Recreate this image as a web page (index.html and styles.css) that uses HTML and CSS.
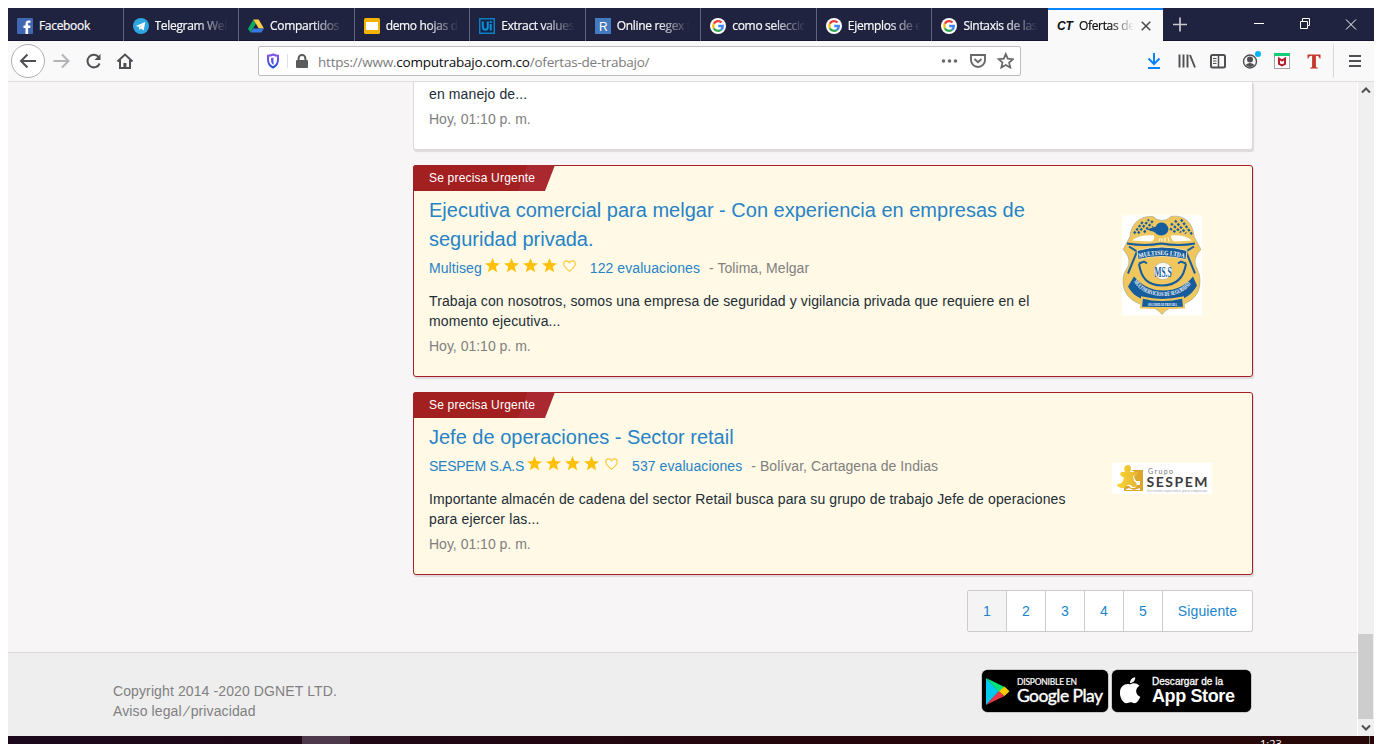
FILE: index.html
```html
<!DOCTYPE html>
<html lang="es">
<head>
<meta charset="utf-8">
<title>Ofertas de trabajo</title>
<link rel="stylesheet" href="styles.css">
</head>
<body>
<svg width="0" height="0" class="defs">
  <symbol id="google" viewBox="0 0 16 16">
    <circle cx="8" cy="8" r="8" fill="#fff"/>
    <g fill="none" stroke-width="2.3">
      <path d="M11.500 4.500A4.800 4.800 0 0 0 3.800 5.800" stroke="#ea4335"/>
      <path d="M3.800 5.800a4.800 4.800 0 0 0 0 4.400" stroke="#fbbc05"/>
      <path d="M3.800 10.200a4.800 4.800 0 0 0 7.200 1.600" stroke="#34a853"/>
      <path d="M11 11.800A4.600 4.600 0 0 0 12.800 8H8.200" stroke="#4285f4"/>
    </g>
  </symbol>
  <symbol id="star" viewBox="0 0 15 15"><path d="M7.500 0l2 5.100 5.500.3-4.300 3.400 1.500 5.400-4.700-3-4.700 3 1.500-5.400L0 5.400l5.500-.3z" fill="#ffc107"/></symbol>
  <symbol id="heart" viewBox="0 0 13 12"><path d="M6.500 11.200C4 9 .8 6.700.8 3.900.8 2.100 2 .9 3.500.9c1.300 0 2.300.7 3 1.900.7-1.200 1.700-1.900 3-1.900 1.500 0 2.700 1.200 2.700 3 0 2.800-3.200 5.100-5.700 7.300z" fill="#fffef5" stroke="#ffc72c" stroke-width="1.100"/></symbol>
</svg>
<div class="window">
  <header class="tabs">
    <div class="tab"><svg class="fav" viewBox="0 0 16 16"><rect width="16" height="16" rx="1" fill="#4267b2"/><path d="M8.500 16V10H6.500V7.500h2V5.800c0-2.200 1.300-3.300 3.200-3.300h1.800v2.300h-1.200c-1 0-1.200.5-1.200 1.200v1.500h2.400L13.200 10h-2.100v6z" fill="#fff"/></svg><span class="label">Facebook</span></div>
    <div class="tab"><svg class="fav" viewBox="0 0 16 16"><circle cx="8" cy="8" r="8" fill="#2ca5e0"/><path d="M2.800 8L12.200 4l-1.500 8.500-2.900-2.100-1.400 1.500-.4-2.900z" fill="#fff"/><path d="M6 9l4.500-3.500L7 9.500z" fill="#b5d9ec"/></svg><span class="label fade">Telegram Web</span></div>
    <div class="tab"><svg class="fav" viewBox="0 0 16 16"><path d="M5.400 1.500L0 10.800 2.600 14.500 8 5.500z" fill="#11a861"/><path d="M5.400 1.500h5.200L16 10.500h-5.200z" fill="#ffcf48"/><path d="M5.200 10.500H16l-2.600 4H2.600z" fill="#3777e3"/></svg><span class="label fade">Compartidos c</span></div>
    <div class="tab"><svg class="fav" viewBox="0 0 16 16"><rect width="16" height="16" rx="1.500" fill="#f5b400"/><rect x="2" y="4" width="12" height="8" fill="#fff"/></svg><span class="label fade">demo hojas d</span></div>
    <div class="tab"><svg class="fav" viewBox="0 0 16 16"><rect width="16" height="16" fill="#0b7fc1"/><rect x="1.500" y="1.500" width="13" height="13" fill="#15254a"/><path d="M3.800 3.500V9c0 3.600 5 3.600 5 0V3.500M11.700 6v6.500M11.700 3v2" fill="none" stroke="#0b91da" stroke-width="2"/></svg><span class="label fade">Extract values</span></div>
    <div class="tab"><svg class="fav" viewBox="0 0 16 16"><rect width="16" height="16" fill="#447bbe"/><text x="4" y="12.500" class="rlogo">R</text></svg><span class="label fade">Online regex t</span></div>
    <div class="tab"><svg class="fav"><use href="#google"/></svg><span class="label fade">como seleccio</span></div>
    <div class="tab"><svg class="fav"><use href="#google"/></svg><span class="label fade">Ejemplos de e</span></div>
    <div class="tab"><svg class="fav"><use href="#google"/></svg><span class="label fade">Sintaxis de las</span></div>
    <div class="tab active"><span class="ct">CT</span><span class="label fade">Ofertas de</span><svg class="close" viewBox="0 0 10 10"><path d="M.7.7l8.600 8.600M9.300.7L.7 9.300" stroke="#4a4a4c" stroke-width="1.500"/></svg></div>
    <svg class="controls" viewBox="0 0 211 33" fill="none" stroke="#fff"><path d="M17 9.500v14M10 16.500h14" stroke="#c8c8cf" stroke-width="1.700"/><path d="M91 15.500h10"/><path d="M137.500 13.500h7v7h-7zM139.500 13v-2.500h7v7h-2.500"/><path d="M183 11.500l10 10M193 11.500l-10 10"/></svg>
  </header>
  <nav class="toolbar">
    <svg class="navicons" viewBox="0 0 140 40" fill="none" stroke="#4f4f54" stroke-width="2"><circle cx="20" cy="20" r="16.500" fill="#fff" stroke="#b1b1b3" stroke-width="1"/><path d="M28 20H13.500M19.500 13.500L13 20l6.500 6.500"/><path d="M45.500 20H60M54 13.500l6.500 6.500-6.500 6.500" stroke="#b4b4b6"/><path d="M91 16.500a6.300 6.300 0 1 0 .6 6"/><path d="M92.500 13v6H86.500z" fill="#4f4f54" stroke="none"/><path d="M109.500 20.500l7.500-7 7.500 7M112 19v8h10v-8"/><path d="M116.900 27v-5" stroke-width="3"/></svg>
    <div class="urlbar">
      <svg class="shield" viewBox="0 0 14 16"><defs><linearGradient id="sg" x1="0" y1="0" x2="0" y2="1"><stop offset="0" stop-color="#8255ea"/><stop offset="1" stop-color="#2850d8"/></linearGradient></defs><path d="M7 1.500c2 1 3.500 1.200 5 1.300v3.700c0 4-2 6.500-5 8-3-1.500-5-4-5-8V2.800c1.500-.1 3-.3 5-1.300z" fill="none" stroke="url(#sg)" stroke-width="2"/><path d="M7.500 4.500v7.500C5.500 10.500 5 9 5 6.500v-1.500z" fill="url(#sg)"/></svg>
      <svg class="lock" viewBox="0 0 12 14"><rect y="6" width="12" height="8" rx="1" fill="#5b5b5b"/><path d="M2.600 6.500V4.400a3.400 3.400 0 0 1 6.800 0v2.100" fill="none" stroke="#5b5b5b" stroke-width="2"/></svg>
      <span class="url">https://www.<b>computrabajo.com.co</b>/ofertas-de-trabajo/</span>
      <svg class="urlicons" viewBox="0 0 74 20" fill="none" stroke="#68686b" stroke-width="1.900"><g fill="#68686b" stroke="none"><circle cx="3.500" cy="10" r="1.800"/><circle cx="9.500" cy="10" r="1.800"/><circle cx="15.500" cy="10" r="1.800"/></g><path d="M31 4h14v5a7 7 0 0 1-14 0zM34.500 8l3.500 3.200L41.500 8"/><path d="M65.800 3l2 4.700 5.200.5-3.900 3.400 1.200 5-4.500-2.700-4.500 2.700 1.200-5-3.900-3.400 5.200-.5z" stroke-width="1.700"/></svg>
    </div>
    <svg class="tools" viewBox="0 0 230 40" fill="none" stroke="#4f4f54" stroke-width="2"><path d="M10 12v11M4.500 17.500L10 23l5.500-5.500M4 27h12" stroke="#0a84ff"/><path d="M35.500 13.500v13M39.500 13.500v13M43.500 13.500v13M46 14l5 12.500" stroke-width="1.900"/><rect x="67" y="14" width="14" height="12.500" rx="1.500"/><path d="M74.500 14v12" stroke-width="1.500"/><path d="M69 17.500h3.500M69 20h3.500M69 22.500h3.500" stroke-width="1"/><circle cx="106" cy="20.500" r="6.500" stroke-width="1.400"/><circle cx="106" cy="18.500" r="3" fill="#4f4f54" stroke="none"/><path d="M101.500 24q4.500-4 9 0-4.500 4-9 0z" fill="#4f4f54" stroke="none"/><circle cx="114" cy="13" r="3" fill="#00b3f4" stroke="none"/><rect x="130.500" y="13.500" width="15" height="14" fill="#fff" stroke="#a4a4a4" stroke-width="1"/><path d="M130 13.500h16" stroke="#13ce78" stroke-width="3"/><path d="M135 17.500v5.500l3 1.500 3-1.500v-5.500l-3 2z" fill="#fff" stroke="#b8202e" stroke-width="2"/><path d="M163.500 13.500h13v4h-1c-.4-2-1.400-2.700-3.600-2.700V25c0 1.200.5 1.600 2 1.800v.7h-7.800v-.7c1.500-.2 2-.6 2-1.800V14.800c-2.200 0-3.200.7-3.600 2.700h-1z" fill="#c5382c" stroke="none"/><path d="M189.500 3.500v33" stroke="#d7d7db" stroke-width="1"/><path d="M205 15h12M205 20h12M205 25h12"/></svg>
  </nav>
  <div class="viewport">
    <div class="page">
      <main class="results">
        <article class="offer first">
          <p class="desc">en manejo de...</p>
          <p class="date">Hoy, 01:10 p. m.</p>
        </article>
        <article class="offer urgent">
          <div class="tag"><span>Se precisa Urgente</span></div>
          <div class="text">
            <h2>Ejecutiva comercial para melgar - Con experiencia en empresas de<br>seguridad privada.</h2>
            <p class="company"><a>Multiseg</a><span class="stars"><svg><use href="#star"/></svg><svg><use href="#star"/></svg><svg><use href="#star"/></svg><svg><use href="#star"/></svg><svg class="heart"><use href="#heart"/></svg></span><a>122 evaluaciones</a><span class="place">- Tolima, Melgar</span></p>
            <p class="desc">Trabaja con nosotros, somos una empresa de seguridad y vigilancia privada que requiere en el<br>momento ejecutiva...</p>
            <p class="date">Hoy, 01:10 p. m.</p>
          </div>
          <div class="logo">
            <svg class="badge" viewBox="0 0 80 100">
              <defs><path id="top" d="M17 42.500q23-6 46 0"/><path id="arc" d="M11.500 66Q21 80.500 41 80.500T70.500 66"/></defs>
              <rect width="80" height="100" fill="#fff"/>
              <path d="M8 21C9 7 19 0 31 1q9 8 18 0c13-2 22 6 23 20l7 13c-6 6-7 12-5 17 3 6 4 9 4 15 0 15-10 21-23 25-7 1-11 3-15 8-4-5-8-7-15-8C12 87 1 81 1 65c0-6 2-9 5-14 2-5 1-11-5-17z" fill="#efc75e" stroke="#9ba58b" stroke-width=".6"/>
              <path d="M10 25q7-6 22-5 1 6-4 6zM70 25q-7-6-21-5 0 5 4 6z" fill="#fff"/>
              <path d="M12 18l9-12M16 18L27 4M22 17l9-12M28 15l3-4M49 8l10 9M53 5l11 13M59 4l11 15M48 13l6 4" stroke="#155d9c" stroke-width="2.200" stroke-dasharray="2.500 1.500"/>
              <path d="M25 14l9-3c1-5 9-5 11-1 4 5-1 10-6 10-4 0-5-3-8-4z" fill="#155d9c"/>
              <path d="M37 26l1-3M40 26v-3M43 26v-4M47 26l-1-4" stroke="#fff"/>
              <path d="M5 28q18 3 34 0 18 3 34 0M7 31l8 5-9 22M72 31l-8 5 9 22" fill="none" stroke="#155d9c" stroke-width="2"/>
              <path d="M15 35q25-7 50 0l-1 9q-24-6-48 0z" fill="#155d9c" stroke="#f6dda0"/>
              <path d="M17 48c2 14 8 22 23 22s22-8 24-22M17 48l5-2 3 2M64 48l-5-2-3 2" fill="none" stroke="#155d9c" stroke-width="2"/>
              <path d="M12 61q12 14 29 14 19 0 30-14l4 9Q66 87 41 87 14 87 6 71z" fill="#155d9c"/>
              <path d="M20 82q20 5 41 0l1 10q-21 1-43 0z" fill="#155d9c" stroke="#efc75e" stroke-width="2"/>
              <ellipse cx="41" cy="55.500" rx="9" ry="8.500" fill="#fff" stroke="#9ba58b" stroke-width=".5"/>
              <text class="b-ms" x="32.500" y="61" textLength="17" lengthAdjust="spacingAndGlyphs">MS.S</text>
              <text class="b-top"><textPath href="#top" textLength="46" lengthAdjust="spacingAndGlyphs">MULTISEG LTDA</textPath></text>
              <text class="b-arc"><textPath href="#arc" textLength="66" lengthAdjust="spacingAndGlyphs">MULTISERVICIOS DE SEGURIDAD</textPath></text>
              <text class="b-low" x="26" y="90" textLength="29" lengthAdjust="spacingAndGlyphs">SEGURIDAD PRIVADA</text>
            </svg>
          </div>
        </article>
        <article class="offer urgent">
          <div class="tag"><span>Se precisa Urgente</span></div>
          <div class="text">
            <h2>Jefe de operaciones - Sector retail</h2>
            <p class="company"><a class="tight">SESPEM S.A.S</a><span class="stars"><svg><use href="#star"/></svg><svg><use href="#star"/></svg><svg><use href="#star"/></svg><svg><use href="#star"/></svg><svg class="heart"><use href="#heart"/></svg></span><a>537 evaluaciones</a><span class="place">- Bolívar, Cartagena de Indias</span></p>
            <p class="desc">Importante almacén de cadena del sector Retail busca para su grupo de trabajo Jefe de operaciones<br>para ejercer las...</p>
            <p class="date">Hoy, 01:10 p. m.</p>
          </div>
          <div class="logo">
            <svg class="sespem" viewBox="0 0 100 31"><defs><linearGradient id="gold"><stop offset="0" stop-color="#f9d835"/><stop offset="1" stop-color="#e8b333"/></linearGradient></defs><rect width="100" height="31" fill="#fff"/><path d="M19 7h12v21H12v-5h5l2 2h4l2-3h3v-4h-4l-2-4 3-4z" fill="#dda52b"/><path d="M13 9c-2-4 0-7 3-7s4 4 2 7l8 0v3l-5 1 1 5c3 2 4 4 1 6-3 1-4-3-7-2s-3 4-7 3-5-3-3-4c4 0 5-3 6-6l-4-3 1-3z" fill="url(#gold)"/><path d="M14 26l3-1 5 2 6-2v2H14z" fill="#fff"/><text class="s-g" x="36" y="11" textLength="25">Grupo</text><text class="s-n" x="34.500" y="24" textLength="61">SESPEM</text><text class="s-s" x="35" y="28.500" textLength="60" lengthAdjust="spacingAndGlyphs">Servicios especiales para empresas</text></svg>
          </div>
        </article>
        <ul class="pager"><li class="current">1</li><li>2</li><li>3</li><li>4</li><li>5</li><li class="next">Siguiente</li></ul>
      </main>
      <footer class="footer">
        <p>Copyright 2014 -2020 DGNET LTD.<br>Aviso legal<span class="slash">/</span>privacidad</p>
        <div class="stores">
          <svg width="128" height="44" viewBox="0 0 128 44"><rect x=".5" y=".5" width="127" height="43" rx="6" fill="#000" stroke="#fff" stroke-opacity=".6"/><path d="M5 9v27l13-13.500z" fill="#00c8ef"/><path d="M5 9l18.500 9-5.500 5z" fill="#00e676"/><path d="M5 36l18.500-9-5.500-5z" fill="#ed3448"/><path d="M23.500 17.500l5 4.700-5 4.800-5.500-4.800z" fill="#ffc900"/><text class="gp-s" x="36" y="15.500" textLength="60">DISPONIBLE EN</text><text class="gp" x="36" y="32.500" textLength="86">Google Play</text></svg>
          <svg width="141" height="44" viewBox="0 0 141 44"><rect x=".5" y=".5" width="140" height="43" rx="6" fill="#000" stroke="#fff" stroke-opacity=".6"/><path d="M19 15.500c2-1.500 6.500-2.500 9.500 1.300-5 3-4 9.200.8 11-1.500 3.500-3.300 6.500-5.800 6.400-1.600-.2-2.200-.9-4-.9s-2.500.8-4 .9C11.500 34.300 8.500 27.500 9 23c.4-6 5.500-9 10-7.500zM19 14c0-3.300 2.400-5.500 5.200-5.800C24.500 11.500 22 14 19 14z" fill="#fff"/><text class="as-s" x="41" y="15.500" textLength="71">Descargar de la</text><text class="as" x="41" y="32.500" textLength="83">App Store</text></svg>
        </div>
      </footer>
    </div>
    <div class="scrollbar"><svg viewBox="0 0 16 17"><path d="M4 10.500L8 6.500l4 4" fill="none" stroke="#505050" stroke-width="2"/></svg><div class="thumb"></div><svg viewBox="0 0 16 17"><path d="M4 6.500l4 4 4-4" fill="none" stroke="#505050" stroke-width="2"/></svg></div>
  </div>
  <div class="taskbar"><span class="task"></span><span class="clock">1:23</span><span class="peek"></span></div>
</div>
</body>
</html>
```
FILE: styles.css
```css
* { box-sizing: border-box; }
html, body { height: 100%; }
body { margin: 0; padding: 8px 8px 0; overflow: hidden; background: #fff; font: 14px/20px "Liberation Sans", Arial, sans-serif; }
p, h2, ul { margin: 0; padding: 0; }
svg { flex: none; display: block; }
.defs { position: absolute; }
.window { width: 1366px; height: 736px; display: flex; flex-direction: column; overflow: hidden; }

.tabs { height: 33px; flex: none; display: flex; background: #202340; border-bottom: 1px solid #14152f; font: 12px/16px "Open Sans", sans-serif; color: #f9f9fa; }
.tab { width: 115.55px; flex: none; height: 33px; display: flex; align-items: center; padding: 2px 9px 0 9px; gap: 6px; border-right: 1px solid #62647c; overflow: hidden; }
.tab:nth-child(9) { border-right: 0; }
.fav { width: 16px; height: 16px; }
.label { white-space: nowrap; overflow: hidden; flex: 1; letter-spacing: -.32px; -webkit-text-stroke: .2px; }
.fade { -webkit-mask-image: linear-gradient(90deg, #000 55%, transparent 98%); mask-image: linear-gradient(90deg, #000 55%, transparent 98%); }
.rlogo { font: 12px "Liberation Sans", sans-serif; fill: #fff; }
.active { background: #f9f9fa; color: #0c0c0d; border-right: 0; border-top: 2px solid #0a84ff; padding-top: 0; padding-right: 12px; height: 33px; }
.ct { font: italic bold 12px/16px "Liberation Sans", sans-serif; width: 16px; }
.close { width: 10px; height: 10px; }
.controls { width: 211px; height: 33px; }

.toolbar { height: 41px; flex: none; display: flex; align-items: center; background: #f9f9fa; border-bottom: 1px solid #dedede; }
.navicons { width: 140px; height: 40px; }
.urlbar { width: 763px; height: 30px; margin-left: 110px; border: 1px solid #bebebe; border-radius: 2px; background: #fff; display: flex; align-items: center; padding: 0 6px 0 7px; }
.shield { width: 14px; height: 16px; }
.lock { box-sizing: content-box; width: 12px; height: 14px; border-left: 1px solid #e0e0e0; padding-left: 8px; margin-left: 7px; }
.url { margin-left: 10px; flex: 1; white-space: nowrap; font: 13.5px/20px "Open Sans", sans-serif; letter-spacing: -.22px; color: #7b7b7d; padding-top: 1px; }
.url b { font-weight: 400; color: #0c0c0d; }
.urlicons { width: 74px; height: 20px; }
.tools { width: 230px; height: 40px; margin-left: 123px; }

.viewport { flex: 1; min-height: 0; display: flex; background: #f7f5f6; }
.page { flex: 1; display: flex; flex-direction: column; }
.results { flex: 1; width: 840px; margin-left: 405px; display: flex; flex-direction: column; gap: 15px; }
.offer { border: 1px solid #dcdadb; border-radius: 3px; background: #fff; box-shadow: 1px 2px 1px #dddadd; position: relative; color: #222d36; }
.first { height: 68px; border-top: 0; border-radius: 0 0 3px 3px; padding: 2px 15px; }
.urgent { border-color: #a91f24; background: #fff9e5; padding: 30px 15px 20px; display: flex; justify-content: space-between; }
.tag { position: absolute; left: -1px; top: -1px; width: 142px; height: 26px; padding-left: 16px; border-radius: 3px 0 0; color: #fff; font-size: 12px; line-height: 26px; letter-spacing: .19px; background: linear-gradient(109deg, #a32021 75.5%, #aa282f 76%); clip-path: polygon(0 0, 100% 0, 132px 100%, 0 100%); }
h2 { font-size: 20px; line-height: 29px; font-weight: 400; color: #2683c6; white-space: nowrap; }
.text { white-space: nowrap; }
.desc { letter-spacing: .12px; }
.company { display: flex; margin: 4px 0 13px; height: 20px; color: #2683c6; letter-spacing: .08px; }
.company .tight { letter-spacing: -.25px; }
.stars { display: flex; gap: 4px; margin: 0 14px 0 3px; }
.stars svg { width: 15px; height: 15px; }
.stars .heart { width: 13px; height: 12px; margin: 2px 0 0 2px; }
.place { color: #808080; margin-left: 9px; letter-spacing: .05px; }
.date { color: #808080; margin-top: 5px; }
.logo { width: 100px; margin-right: 25px; display: flex; align-items: center; justify-content: center; }
.badge { width: 80px; height: 101px; margin-top: -22px; }
.sespem { width: 100px; height: 31px; margin-top: -20px; }
.badge text { font-family: "Liberation Serif", serif; font-weight: 700; fill: #fff; }
.badge .b-ms { font-size: 15px; fill: #155d9c; }
.b-top { font-size: 6.5px; }
.b-arc { font-size: 6px; }
.b-low { font-size: 3.5px; }
.s-g { font: 7px Lato, sans-serif; fill: #777; }
.s-n { font: bold 14px Lato, sans-serif; fill: #3d3d40; }
.s-s { font: 3.8px Lato, sans-serif; fill: #aaa; }

.pager { list-style: none; display: flex; align-self: flex-end; height: 42px; border: 1px solid #ccc; border-radius: 2px; background: #fff; color: #2085ca; line-height: 40px; text-align: center; }
.pager li { width: 39px; border-right: 1px solid #ccc; }
.pager .current { background: #f4f4f4; }
.pager .next { width: 89px; border: 0; letter-spacing: .1px; }

.footer { height: 84px; flex: none; border-top: 1px solid #dadada; background: #eee; display: flex; justify-content: space-between; padding: 16px 105px 0; color: #808080; }
.footer p { padding-top: 12px; letter-spacing: .11px; }
.slash { display: inline-block; width: 9px; text-align: center; transform: skewX(-20deg); }
.stores { display: flex; gap: 2px; }
.gp-s { font: 8.5px Lato, sans-serif; fill: #fff; stroke: #fff; stroke-width: .2; }
.gp { font: 17.5px Lato, sans-serif; fill: #fff; stroke: #fff; stroke-width: .4; }
.as-s { font: 10px "Liberation Sans", sans-serif; fill: #fff; stroke: #fff; stroke-width: .3; }
.as { font: bold 18px "Liberation Sans", sans-serif; fill: #fff; }

.scrollbar { width: 17px; flex: none; border-left: 1px solid #fff; background: #f0f0f0; display: flex; flex-direction: column; }
.scrollbar svg { width: 16px; height: 17px; }
.thumb { width: 15px; height: 85px; background: #cdcdcd; margin-top: auto; }

.taskbar { height: 8px; flex: none; display: flex; background: linear-gradient(90deg, #1b081c, #25050a 65%, #280708); overflow: hidden; }
.task { width: 48px; margin-left: 294px; background: #4d384b; }
.clock { margin-left: 910px; width: 30px; color: #fff; font: 11px/16px "Open Sans", sans-serif; }
.peek { margin-left: 79px; width: 1px; background: #776; }
```
